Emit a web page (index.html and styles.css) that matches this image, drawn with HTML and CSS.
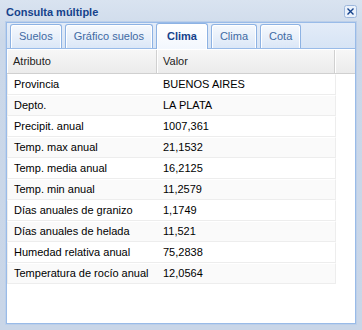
FILE: index.html
```html
<!DOCTYPE html>
<html lang="es">
<head>
	<meta charset="UTF-8">
	<title>Consulta múltiple</title>
	<link rel="stylesheet" href="styles.css">
</head>
<body>
<div class="x-window">
	<div class="x-window-header">
		<span class="x-window-title">Consulta múltiple</span>
		<span class="x-tool-close">
			<svg width="13" height="13" viewBox="0 0 13 13">
				<rect x="0.5" y="0.5" width="12" height="12" rx="2" fill="#eaf1fb" stroke="#9db7dc"/>
				<path d="M3.5 3.5 L9.5 9.5 M9.5 3.5 L3.5 9.5" stroke="#15428b" stroke-width="1.4" fill="none"/>
			</svg>
		</span>
	</div>
	<div class="x-window-body">
		<ul class="x-tab-strip">
			<li class="x-tab">Suelos</li>
			<li class="x-tab">Gráfico suelos</li>
			<li class="x-tab x-tab-active">Clima</li>
			<li class="x-tab">Clima</li>
			<li class="x-tab">Cota</li>
		</ul>
		<div class="x-grid">
			<div class="x-grid-header">
				<div class="x-grid-hd col-attr">Atributo</div>
				<div class="x-grid-hd col-val">Valor</div>
				<div class="x-grid-hd col-spacer"></div>
			</div>
			<div class="x-grid-row"><div class="x-grid-cell col-attr">Provincia</div><div class="x-grid-cell col-val">BUENOS AIRES</div></div>
			<div class="x-grid-row alt"><div class="x-grid-cell col-attr">Depto.</div><div class="x-grid-cell col-val">LA PLATA</div></div>
			<div class="x-grid-row"><div class="x-grid-cell col-attr">Precipit. anual</div><div class="x-grid-cell col-val">1007,361</div></div>
			<div class="x-grid-row alt"><div class="x-grid-cell col-attr">Temp. max anual</div><div class="x-grid-cell col-val">21,1532</div></div>
			<div class="x-grid-row"><div class="x-grid-cell col-attr">Temp. media anual</div><div class="x-grid-cell col-val">16,2125</div></div>
			<div class="x-grid-row alt"><div class="x-grid-cell col-attr">Temp. min anual</div><div class="x-grid-cell col-val">11,2579</div></div>
			<div class="x-grid-row"><div class="x-grid-cell col-attr">Días anuales de granizo</div><div class="x-grid-cell col-val">1,1749</div></div>
			<div class="x-grid-row alt"><div class="x-grid-cell col-attr">Días anuales de helada</div><div class="x-grid-cell col-val">11,521</div></div>
			<div class="x-grid-row"><div class="x-grid-cell col-attr">Humedad relativa anual</div><div class="x-grid-cell col-val">75,2838</div></div>
			<div class="x-grid-row alt"><div class="x-grid-cell col-attr">Temperatura de rocío anual</div><div class="x-grid-cell col-val">12,0564</div></div>
		</div>
	</div>
</div>
</body>
</html>
```

FILE: styles.css
```css
* { margin: 0; padding: 0; box-sizing: border-box; }
ul, ol { list-style: none; }
body {
	font-family: "Liberation Sans", Arial, sans-serif;
	font-size: 11px;
	color: #000;
	background: #fff;
}
.x-window {
	width: 362px;
	height: 330px;
	padding: 0 6px 6px 6px;
	display: flex;
	flex-direction: column;
	background: linear-gradient(#d9e3f0, #cbd8e9 40px, #c9d6e8);
}
.x-window-header {
	height: 22px;
	display: flex;
	align-items: center;
	justify-content: space-between;
}
.x-window-title {
	font-weight: bold;
	color: #15428b;
	padding-top: 2px;
}
.x-tool-close {
	display: flex;
	margin-right: -1px;
	margin-top: 1px;
}
.x-window-body {
	flex: 1;
	display: flex;
	flex-direction: column;
	background: #fff;
	border: 1px solid #99bbe8;
	box-shadow: 0 0 0 1px #bccfe9;
}
.x-tab-strip {
	height: 26px;
	display: flex;
	align-items: flex-end;
	gap: 3px;
	padding-left: 3px;
	background: linear-gradient(#e3ecf8, #d7e4f5);
	border-bottom: 1px solid #99bbe8;
}
.x-tab {
	height: 24px;
	line-height: 22px;
	padding: 0 8px;
	color: #416aa3;
	border: 1px solid #8db2e3;
	border-bottom: none;
	border-radius: 3px 3px 0 0;
	background: linear-gradient(#f6f9fd, #dbe7f7);
	box-shadow: inset 1px 1px 0 #fff, inset -1px 0 0 #fff;
}
.x-tab-active {
	height: 26px;
	margin-bottom: -1px;
	line-height: 24px;
	padding: 0 10px;
	font-weight: bold;
	color: #15428b;
	background: linear-gradient(#fff, #f2f7fe);
}
.x-grid {
	padding: 1px 0 0 0;
}
.x-grid-header {
	height: 24px;
	display: flex;
	background: linear-gradient(#f7f7f7, #ebebeb);
	border-bottom: 1px solid #d0d0d0;
}
.x-grid-hd {
	line-height: 23px;
	padding-left: 6px;
	color: #222;
	border-right: 1px solid #d0d0d0;
	box-shadow: inset 1px 0 0 #fff;
}
.col-attr { width: 150px; }
.col-val { width: 178px; }
.col-spacer {
	flex: 1;
	border-right: none;
}
.x-grid-row {
	width: 329px;
	height: 21px;
	display: flex;
	border: 1px solid #ededed;
	border-top-color: #fff;
}
.x-grid-row.alt {
	background: #fafafa;
}
.x-grid-cell {
	line-height: 19px;
	padding-left: 6px;
	white-space: nowrap;
}
.x-grid-cell.col-attr { width: 149px; }
```
